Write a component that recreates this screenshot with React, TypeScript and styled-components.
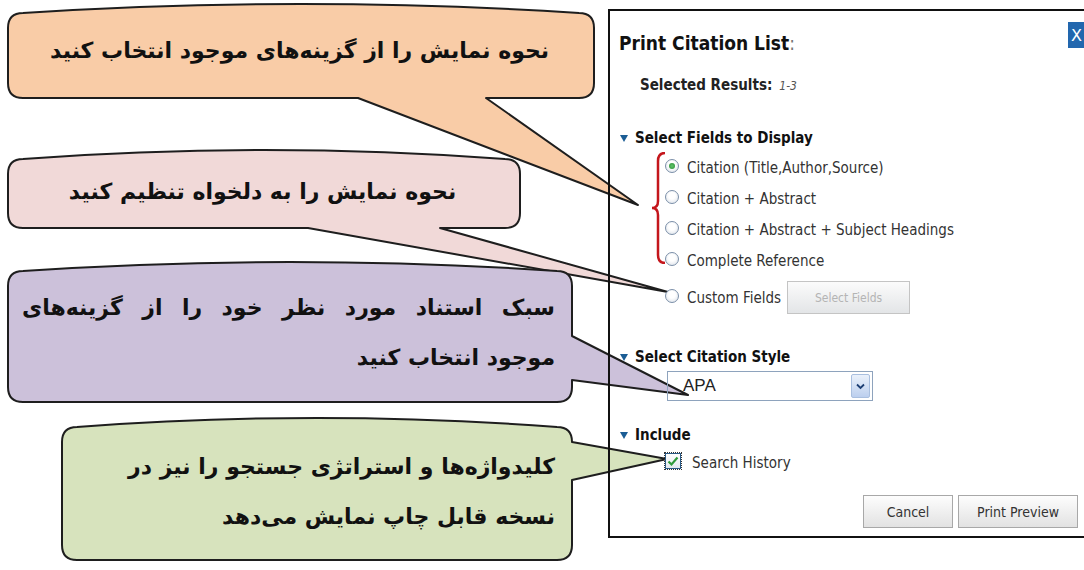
import React from 'react';
import styled, { createGlobalStyle } from 'styled-components';

const GlobalStyle = createGlobalStyle`
  html, body {
    margin: 0;
    padding: 0;
    background: #fff;
  }
  body {
    overflow: hidden;
  }
`;

const Canvas = styled.div`
  width: 1084px;
  height: 570px;
  display: flex;
  overflow: hidden;
  background: #fff;
`;

/* ---------- callouts (left side) ---------- */

const Callouts = styled.div`
  flex: none;
  width: 608px;
  display: flex;
  flex-direction: column;
  align-items: flex-start;
`;

const BubbleBox = styled.div<{ $w: number; $h: number; $top: number; $left: number; $pad: number }>`
  position: relative;
  flex: none;
  box-sizing: border-box;
  width: ${(p) => p.$w}px;
  height: ${(p) => p.$h}px;
  margin-top: ${(p) => p.$top}px;
  margin-left: ${(p) => p.$left}px;
  padding: ${(p) => p.$pad}px 17px 0 14px;
  display: flex;
  flex-direction: column;
  justify-content: center;
`;

const BubbleShape = styled.svg`
  position: absolute;
  left: 0;
  top: 0;
  overflow: visible;
`;

const BubbleText = styled.p<{ $align: 'center' | 'right' }>`
  position: relative;
  margin: 0;
  direction: rtl;
  font-family: 'DejaVu Sans', sans-serif;
  font-weight: bold;
  font-size: 22px;
  line-height: 50px;
  color: #111;
  text-align: ${(p) => p.$align};
`;

const Line = styled.span<{ $justify?: boolean }>`
  display: block;
  text-align: ${(p) => (p.$justify ? 'justify' : 'right')};
  text-align-last: ${(p) => (p.$justify ? 'justify' : 'right')};
`;

type Tail = { side: 'bottom' | 'right'; a: number; b: number; x: number; y: number };

function bubblePath(w: number, h: number, t: Tail) {
  const r = 15;
  const b = 9;
  const d = [`M0 ${b + r}`, `L0 ${h - r}`, `Q0 ${h} ${r} ${h}`];
  if (t.side === 'bottom') d.push(`L${t.a} ${h}`, `L${t.x} ${t.y}`, `L${t.b} ${h}`);
  d.push(`L${w - r} ${h}`, `Q${w} ${h} ${w} ${h - r}`);
  if (t.side === 'right') d.push(`L${w} ${t.b}`, `L${t.x} ${t.y}`, `L${w} ${t.a}`);
  d.push(`L${w} ${b + r}`, `Q${w} ${b} ${w - r} ${b}`, `Q${w / 2} ${-b} ${r} ${b}`, `Q0 ${b} 0 ${b + r}`, 'Z');
  return d.join(' ');
}

type BubbleProps = {
  w: number;
  h: number;
  top: number;
  left: number;
  pad?: number;
  fill: string;
  tail: Tail;
  align?: 'center' | 'right';
  children: React.ReactNode;
};

const Bubble = ({ w, h, top, left, pad = 6, fill, tail, align = 'center', children }: BubbleProps) => (
  <BubbleBox $w={w} $h={h} $top={top} $left={left} $pad={pad}>
    <BubbleShape width={w} height={h}>
      <path d={bubblePath(w, h, tail)} fill={fill} stroke="#1e1e1e" strokeWidth={2} strokeLinejoin="round" />
    </BubbleShape>
    <BubbleText $align={align}>{children}</BubbleText>
  </BubbleBox>
);

/* ---------- dialog (right side) ---------- */

const Dialog = styled.section`
  position: relative;
  flex: none;
  box-sizing: border-box;
  margin-top: 9px;
  width: 482px;
  height: 529px;
  border: 2px solid #111;
  display: flex;
  flex-direction: column;
  font-family: 'DejaVu Sans Condensed', 'DejaVu Sans', sans-serif;
  font-stretch: condensed;
  color: #333;
`;

const Header = styled.header`
  display: flex;
  justify-content: space-between;
  align-items: flex-start;
  height: 47px;
  padding-left: 9px;
`;

const Title = styled.h1`
  margin: 20px 0 0;
  font-size: 19px;
  line-height: 24px;
  font-weight: bold;
  color: #111;

  span {
    font-weight: normal;
    color: #777;
  }
`;

const CloseButton = styled.button`
  margin-top: 11px;
  width: 20px;
  height: 26px;
  padding: 0 0 0 3px;
  border: none;
  background: #2267ae;
  color: #fff;
  font: 16px 'DejaVu Sans', sans-serif;
  text-align: left;
`;

const Selected = styled.div`
  margin: 15px 0 0 30px;
  font-size: 15px;
  line-height: 24px;
  font-weight: bold;
  color: #222;

  em {
    margin-left: 7px;
    font-size: 12px;
    font-weight: normal;
    color: #555;
  }
`;

const SectionHeader = styled.h2<{ $top: number }>`
  margin: ${(p) => p.$top}px 0 0 10px;
  display: flex;
  align-items: center;
  gap: 7px;
  height: 24px;
  font-size: 15px;
  font-weight: bold;
  color: #111;
`;

const Marker = styled.span`
  width: 0;
  height: 0;
  border-left: 4px solid transparent;
  border-right: 4px solid transparent;
  border-top: 7px solid #1b5d95;
`;

const OptionsGroup = styled.div`
  display: flex;
  margin: 2px 0 0 41px;
`;

const Brace = styled.svg`
  flex: none;
  align-self: flex-start;
`;

const RadioList = styled.div`
  display: flex;
  flex-direction: column;
`;

const OptionRow = styled.label<{ $top?: number; $left?: number; $h?: number }>`
  display: flex;
  align-items: center;
  gap: 8px;
  height: ${(p) => p.$h ?? 31}px;
  margin: ${(p) => p.$top ?? 0}px 0 0 ${(p) => p.$left ?? 0}px;
  font-size: 15px;
  color: #333;
`;

const Radio = styled.span<{ $on?: boolean }>`
  position: relative;
  flex: none;
  box-sizing: border-box;
  width: 14px;
  height: 14px;
  border-radius: 50%;
  border: 1px solid #7b8fa8;
  background: radial-gradient(circle at 50% 40%, #fff 35%, #d6dde6 100%);
  margin-top: -3px;

  &::after {
    content: '';
    display: ${(p) => (p.$on ? 'block' : 'none')};
    position: absolute;
    left: 3px;
    top: 3px;
    width: 6px;
    height: 6px;
    border-radius: 50%;
    background: radial-gradient(circle, #5fc46a 0%, #2a8c36 100%);
  }
`;

const FieldsButton = styled.button`
  width: 123px;
  height: 33px;
  margin-left: -2px;
  border: 1px solid #c4c4c4;
  background: linear-gradient(#fbfbfb, #e3e5e7);
  color: #b4b4b4;
  font: 12px 'DejaVu Sans Condensed', 'DejaVu Sans', sans-serif;
  font-stretch: condensed;
`;

const SelectBox = styled.div`
  box-sizing: border-box;
  margin: 2px 0 0 57px;
  width: 206px;
  height: 30px;
  border: 1px solid #8ea3bd;
  display: flex;
  align-items: center;
  justify-content: space-between;
  padding: 0 2px 0 15px;
  font: 17px 'Liberation Sans', Arial, sans-serif;
  color: #222;
`;

const SelectArrow = styled.span`
  box-sizing: border-box;
  width: 19px;
  height: 24px;
  border: 1px solid #a9bfdf;
  border-radius: 2px;
  background: linear-gradient(#eaf1fb, #bccfee);
  display: flex;
  align-items: center;
  justify-content: center;
`;

const CheckRow = styled.label`
  display: flex;
  align-items: center;
  gap: 11px;
  height: 26px;
  margin: 3px 0 0 55px;
  font-size: 15px;
  color: #333;
`;

const CheckBox = styled.span`
  box-sizing: border-box;
  width: 16px;
  height: 16px;
  margin-top: -4px;
  outline: 1px dotted #333;
  border: 1px solid #2a5a86;
  background: linear-gradient(#fff, #e2e8ee);
  display: flex;
  align-items: center;
  justify-content: center;
`;

const ButtonRow = styled.div`
  margin-top: 19px;
  display: flex;
  justify-content: flex-end;
  gap: 5px;
  padding-right: 10px;
`;

const ActionButton = styled.button<{ $w: number }>`
  width: ${(p) => p.$w}px;
  height: 33px;
  border: 1px solid #a8a8a8;
  background: linear-gradient(#fdfdfd, #e2e2e2);
  color: #333;
  font: 14px 'DejaVu Sans Condensed', 'DejaVu Sans', sans-serif;
  font-stretch: condensed;
`;

const fieldOptions = [
  'Citation (Title,Author,Source)',
  'Citation + Abstract',
  'Citation + Abstract + Subject Headings',
  'Complete Reference',
];

export default function App() {
  return (
    <>
      <GlobalStyle />
      <Canvas>
        <Callouts>
          <Bubble
            w={586}
            h={94}
            top={4}
            left={8}
            pad={0}
            fill="#f9cca7"
            tail={{ side: 'bottom', a: 350, b: 478, x: 630, y: 201 }}
          >
            نحوه نمایش را از گزینه‌های موجود انتخاب کنید
          </Bubble>
          <Bubble
            w={512}
            h={78}
            top={52}
            left={8}
            fill="#f1d9d8"
            tail={{ side: 'bottom', a: 300, b: 432, x: 660, y: 142 }}
          >
            نحوه نمایش را به دلخواه تنظیم کنید
          </Bubble>
          <Bubble
            w={564}
            h={140}
            top={34}
            left={8}
            pad={2}
            fill="#ccc1da"
            align="right"
            tail={{ side: 'right', a: 74, b: 118, x: 680, y: 133 }}
          >
            <Line $justify>سبک استناد مورد نظر خود را از گزینه‌های</Line>
            <Line>موجود انتخاب کنید</Line>
          </Bubble>
          <Bubble
            w={510}
            h={142}
            top={16}
            left={62}
            fill="#d7e3bd"
            align="right"
            tail={{ side: 'right', a: 24, b: 62, x: 605, y: 41 }}
          >
            <Line>کلیدواژه‌ها و استراتژی جستجو را نیز در</Line>
            <Line>نسخه قابل چاپ نمایش می‌دهد</Line>
          </Bubble>
        </Callouts>

        <Dialog>
          <Header>
            <Title>
              Print Citation List<span>:</span>
            </Title>
            <CloseButton>X</CloseButton>
          </Header>

          <Selected>
            Selected Results:<em>1-3</em>
          </Selected>

          <SectionHeader $top={28}>
            <Marker />
            Select Fields to Display
          </SectionHeader>

          <OptionsGroup>
            <Brace width={14} height={112} viewBox="0 0 14 112">
              <path
                d="M14 1 Q7 1 7 9 L7 49 Q7 56 1 56 Q7 56 7 63 L7 103 Q7 111 14 111"
                fill="none"
                stroke="#c4161c"
                strokeWidth={2.5}
              />
            </Brace>
            <RadioList>
              {fieldOptions.map((label, i) => (
                <OptionRow key={label}>
                  <Radio $on={i === 0} />
                  {label}
                </OptionRow>
              ))}
            </RadioList>
          </OptionsGroup>

          <OptionRow $top={5} $left={55} $h={33}>
            <Radio />
            Custom Fields
            <FieldsButton>Select Fields</FieldsButton>
          </OptionRow>

          <SectionHeader $top={31}>
            <Marker />
            Select Citation Style
          </SectionHeader>
          <SelectBox>
            APA
            <SelectArrow>
              <svg width="9" height="7" viewBox="0 0 9 7">
                <path d="M1 1.5 L4.5 5 L8 1.5" fill="none" stroke="#1d3f73" strokeWidth={1.8} />
              </svg>
            </SelectArrow>
          </SelectBox>

          <SectionHeader $top={22}>
            <Marker />
            Include
          </SectionHeader>
          <CheckRow>
            <CheckBox>
              <svg width="12" height="11" viewBox="0 0 12 11">
                <path d="M1.5 5.5 L4.5 8.5 L10.5 1.5" fill="none" stroke="#2e9a3a" strokeWidth={2.2} />
              </svg>
            </CheckBox>
            Search History
          </CheckRow>

          <ButtonRow>
            <ActionButton $w={90}>Cancel</ActionButton>
            <ActionButton $w={120}>Print Preview</ActionButton>
          </ButtonRow>
        </Dialog>
      </Canvas>
    </>
  );
}
